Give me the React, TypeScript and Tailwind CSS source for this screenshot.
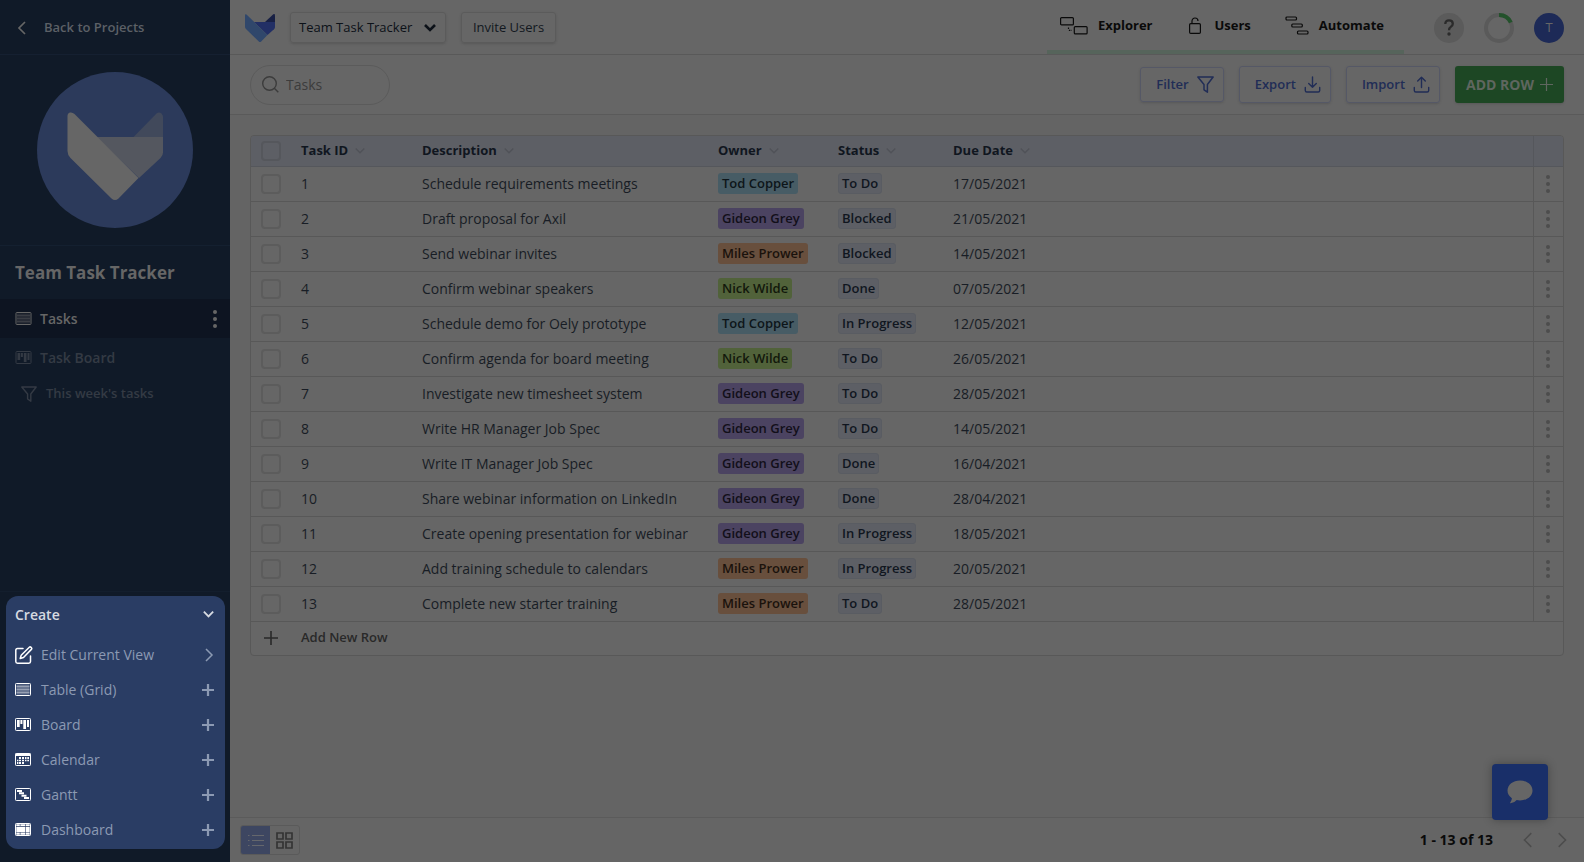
import React from "react";

const FONT = "font-['Open_Sans','Liberation_Sans',sans-serif]";

type Task = { id: number; text: string; owner: string; status: string; due: string };

const tasks: Task[] = [
  { id: 1, text: "Schedule requirements meetings", owner: "Tod Copper", status: "To Do", due: "17/05/2021" },
  { id: 2, text: "Draft proposal for Axil", owner: "Gideon Grey", status: "Blocked", due: "21/05/2021" },
  { id: 3, text: "Send webinar invites", owner: "Miles Prower", status: "Blocked", due: "14/05/2021" },
  { id: 4, text: "Confirm webinar speakers", owner: "Nick Wilde", status: "Done", due: "07/05/2021" },
  { id: 5, text: "Schedule demo for Oely prototype", owner: "Tod Copper", status: "In Progress", due: "12/05/2021" },
  { id: 6, text: "Confirm agenda for board meeting", owner: "Nick Wilde", status: "To Do", due: "26/05/2021" },
  { id: 7, text: "Investigate new timesheet system", owner: "Gideon Grey", status: "To Do", due: "28/05/2021" },
  { id: 8, text: "Write HR Manager Job Spec", owner: "Gideon Grey", status: "To Do", due: "14/05/2021" },
  { id: 9, text: "Write IT Manager Job Spec", owner: "Gideon Grey", status: "Done", due: "16/04/2021" },
  { id: 10, text: "Share webinar information on LinkedIn", owner: "Gideon Grey", status: "Done", due: "28/04/2021" },
  { id: 11, text: "Create opening presentation for webinar", owner: "Gideon Grey", status: "In Progress", due: "18/05/2021" },
  { id: 12, text: "Add training schedule to calendars", owner: "Miles Prower", status: "In Progress", due: "20/05/2021" },
  { id: 13, text: "Complete new starter training", owner: "Miles Prower", status: "To Do", due: "28/05/2021" },
];

const ownerStyle: Record<string, string> = {
  "Tod Copper": "bg-[#475c65] text-[#0d1519]",
  "Gideon Grey": "bg-[#4b4361] text-[#120f19]",
  "Miles Prower": "bg-[#684f3d] text-[#1a120c]",
  "Nick Wilde": "bg-[#51623a] text-[#12180b]",
};

type IconProps = { className?: string };

function Chevron({ dir, className = "", w = 2 }: IconProps & { dir: "down" | "left" | "right"; w?: number }) {
  const d = { down: "M1 3l5 5 5-5", left: "M8 0L2 6l6 6", right: "M4 0l6 6-6 6" }[dir];
  return (
    <svg viewBox="-1 -1 14 14" className={className} fill="none" stroke="currentColor" strokeWidth={w} aria-hidden="true">
      <path d={d} />
    </svg>
  );
}

function Plus({ className = "", w = 2 }: IconProps & { w?: number }) {
  return (
    <svg viewBox="0 0 14 14" className={className} stroke="currentColor" strokeWidth={w} aria-hidden="true">
      <path d="M7 0v14M0 7h14" />
    </svg>
  );
}

function Dots({ className = "" }: IconProps) {
  return (
    <svg viewBox="0 0 4 18" className={className} fill="currentColor" aria-hidden="true">
      <circle cx="2" cy="2" r="2" />
      <circle cx="2" cy="9" r="2" />
      <circle cx="2" cy="16" r="2" />
    </svg>
  );
}

function Funnel({ className = "" }: IconProps) {
  return (
    <svg viewBox="0 0 16 16" className={className} fill="none" stroke="currentColor" strokeWidth="1.4" strokeLinejoin="round" aria-hidden="true">
      <path d="M.8 1h14.4L9.8 8v7.2L6.6 13V8z" />
    </svg>
  );
}

function LogoSmall() {
  return (
    <svg viewBox="0 0 30 28" className="h-7 w-[30px]" role="img" aria-label="Workspace logo">
      <path d="M20 8l8.3-7.7Q30-.5 30 1.5V8z" fill="#182044" />
      <path d="M9 8h21v5q0 1.200-1 2.200L22.500 21z" fill="#222f65" />
      <path d="M0 1.500Q0-.5 1.500.6L22.500 21l-6.300 6.400q-1.200 1-2.400 0L1 15Q0 14 0 12.500z" fill="#30476b" />
    </svg>
  );
}

function LogoLarge() {
  return (
    <svg viewBox="0 0 156 156" className="size-[156px]" role="img" aria-label="Project logo">
      <circle cx="78" cy="78" r="78" fill="#2c3a5b" />
      <path d="M96.500 65L119.500 41.500Q122 39.500 124.500 41.500 126 43 126 45v20z" fill="#41495b" />
      <path d="M59.500 65H126v15.500q0 3-2.500 5.500L102 106z" fill="#54575f" />
      <path d="M30.500 44Q30.500 41 33 40.500q2.300-.5 4.500 1.500L101.500 106 81.500 126.500q-3.500 3.200-7 0L33.500 86q-3-3-3-7z" fill="#666" />
    </svg>
  );
}

function GridIcon({ className = "" }: IconProps) {
  return (
    <svg viewBox="0 0 16 13" className={className} fill="none" stroke="currentColor" aria-hidden="true">
      <rect x=".5" y=".5" width="15" height="12" rx=".8" />
      <rect x="1.500" y="1.500" width="13" height="10" fill="currentColor" stroke="none" opacity=".3" />
      <path d="M1.500 3.500h13M1.500 6.500h13M1.500 9.500h13" opacity=".3" />
    </svg>
  );
}

function BoardIcon({ className = "" }: IconProps) {
  return (
    <svg viewBox="0 0 16 13" className={className} fill="none" stroke="currentColor" aria-hidden="true">
      <rect x=".5" y=".5" width="15" height="12" rx=".8" />
      <path d="M2 2h2.700v7H2zM5.400 2h2v4h-2zM8.300 2H11v9H8.300zM12 2h2v7h-2z" fill="currentColor" stroke="none" />
    </svg>
  );
}

function CalendarIcon({ className = "" }: IconProps) {
  return (
    <svg viewBox="0 0 16 13" className={className} fill="none" stroke="currentColor" aria-hidden="true">
      <rect x=".5" y=".5" width="15" height="12" rx=".8" />
      <path d="M.5.500h15V3H.5z" fill="currentColor" stroke="none" />
      <path d="M4 4h2v2H4zM7 4h2v2H7zM10 4h1.500v2H10zM12.300 4H14v2h-1.700zM2 6.700h1.400v1.500H2zM4 6.700h2v1.500H4zM7 6.700h2v1.500H7zM10 6.700h1.500v1.500H10zM12.300 6.700H14v1.500h-1.700zM2 9h1.400v2H2zM4 9h2v2H4zM7 9h2v2H7z" fill="currentColor" stroke="none" />
    </svg>
  );
}

function GanttIcon({ className = "" }: IconProps) {
  return (
    <svg viewBox="0 0 16 13" className={className} fill="none" stroke="currentColor" aria-hidden="true">
      <rect x=".5" y=".5" width="15" height="12" rx=".8" />
      <path d="M2 2h5v2H2zM4 4.300h5v2H4zM6.500 6.700h5v2h-5zM9 9h5v2H9z" fill="currentColor" stroke="none" />
    </svg>
  );
}

function DashboardIcon({ className = "" }: IconProps) {
  return (
    <svg viewBox="0 0 16 13" className={className} fill="none" stroke="currentColor" aria-hidden="true">
      <rect x=".5" y=".5" width="15" height="12" rx=".8" />
      <path d="M1.300 1.300h3.500V3H1.300zM5.400 1.300h5V3h-5zM11 1.300h3.700V3H11zM1.300 3.700h9.100v5.200H1.300zM11 3.700h3.700v5.200H11zM1.300 9.600h3.500v2.100H1.300zM5.400 9.600h5v2.100h-5zM11 9.600h3.700v2.100H11z" fill="currentColor" stroke="none" />
    </svg>
  );
}

function EditIcon({ className = "" }: IconProps) {
  return (
    <svg viewBox="0 0 18 18" className={className} fill="none" stroke="currentColor" strokeWidth="1.500" strokeLinejoin="round" strokeLinecap="round" aria-hidden="true">
      <path d="M8 2.500H2.500Q.8 2.500.8 4.200v11.300q0 1.700 1.700 1.700h11.300q1.700 0 1.700-1.700V10" />
      <path d="M14.300 1.300q.8-.8 1.800 0l.3.300q.8 1 0 1.800L8.500 11.500l-3.300 1 1-3.200z" />
    </svg>
  );
}

const createItems: [string, (p: IconProps) => React.ReactElement][] = [
  ["Table (Grid)", GridIcon],
  ["Board", BoardIcon],
  ["Calendar", CalendarIcon],
  ["Gantt", GanttIcon],
  ["Dashboard", DashboardIcon],
];

function Sidebar() {
  return (
    <aside className="flex w-[230px] shrink-0 flex-col bg-[#101a28] text-[#666]">
      <a href="#projects" className="flex h-[55px] items-center border-b border-[#152031] pt-px pl-4 text-[13px] font-semibold text-[#5c6066]">
        <Chevron dir="left" className="mr-[14px] size-[14px] text-[#666]" w={1.7} />
        Back to Projects
      </a>
      <div className="flex h-[191px] justify-center border-b border-[#142030] pt-[17px]">
        <LogoLarge />
      </div>
      <h1 className="flex h-[53px] items-center pl-[15px] text-[17px] font-bold">Team Task Tracker</h1>
      <nav aria-label="Views" className="flex flex-col">
        <div className="flex h-[39px] items-center bg-[#0d1421] pr-[13px] pl-[15px]">
          <a href="#tasks" className="flex flex-1 items-center gap-2 text-sm font-semibold">
            <GridIcon className="h-[13px] w-[17px]" />
            Tasks
          </a>
          <button aria-label="View options" className="flex">
            <Dots className="h-[18px] w-1" />
          </button>
        </div>
        <a href="#board" className="flex h-[39px] items-center gap-2 pl-[15px] text-sm font-semibold text-[#343a44]">
          <BoardIcon className="h-[13px] w-[17px]" />
          Task Board
        </a>
        <a href="#week" className="flex h-[34px] items-center gap-[9px] pl-[21px] text-[13px] font-semibold text-[#343a44]">
          <Funnel className="size-4" />
          This week's tasks
        </a>
      </nav>
      <div className="mt-auto border-t border-[#131e2d] pt-1 pr-[5px] pb-[13px] pl-[6px]">
        <section aria-label="Create" className="rounded-xl bg-[#2a3d64] pr-[10px] pb-[2px] pl-[9px] text-[#8c9ab3]">
          <button className="flex h-[37px] w-full items-center justify-between text-sm font-semibold text-[#d6dae1]">
            Create
            <Chevron dir="down" className="size-[13px]" w={2} />
          </button>
          <button className="mt-1 flex h-[35px] w-full items-center text-sm">
            <EditIcon className="mr-2 size-[18px] text-white" />
            Edit Current View
            <Chevron dir="right" className="ml-auto size-[14px]" w={1.5} />
          </button>
          {createItems.map(([label, Icon]) => (
            <button key={label} className="flex h-[35px] w-full items-center text-sm">
              <Icon className="mr-[10px] h-[13px] w-4 text-white" />
              {label}
              <Plus className="mr-px ml-auto size-3" w={2.6} />
            </button>
          ))}
        </section>
      </div>
    </aside>
  );
}

function TopBar() {
  return (
    <header className="flex h-[55px] shrink-0 items-center border-b border-[#595959] pt-px pr-5 pl-[15px]">
      <LogoSmall />
      <button className="ml-[15px] flex h-[31px] w-[156px] items-center justify-between rounded-[3px] border border-[#5b5b5b] px-2 text-[13px] font-medium text-[#0c1118] shadow-sm">
        Team Task Tracker
        <Chevron dir="down" className="size-[14px]" w={2.6} />
      </button>
      <button className="ml-[15px] h-[31px] w-[95px] rounded-[3px] border border-[#5b5b5b] text-[13px] font-medium text-[#121820] shadow-sm">
        Invite Users
      </button>
      <nav aria-label="Main" className="ml-auto flex h-full border-b-4 border-[#56645b] pr-5 pl-[13px] text-[13px] font-bold text-[#0a0a0a]">
        <a href="#explorer" className="flex items-center">
          <svg viewBox="0 0 28 18" className="mr-[10px] h-[18px] w-7" fill="none" stroke="currentColor" strokeWidth="1.200" aria-hidden="true">
            <rect x=".6" y=".6" width="12.800" height="7.300" rx="1" />
            <rect x="14.300" y="9.600" width="12.800" height="7.300" rx="1" />
            <path d="M8.500 10.500v1.500l1 1.300h2.300" strokeDasharray="1.500 1" />
          </svg>
          Explorer
        </a>
        <a href="#users" className="ml-9 flex items-center">
          <svg viewBox="0 0 12 17" className="mr-[14px] h-[17px] w-3" fill="none" stroke="currentColor" strokeWidth="1.200" aria-hidden="true">
            <rect x=".6" y="6.600" width="10.800" height="9.800" rx="1.200" />
            <path d="M3 6.600V4a3 3 0 0 1 6 0" />
          </svg>
          Users
        </a>
        <a href="#automate" className="ml-[34px] flex items-center">
          <svg viewBox="0 0 24 19" className="mr-[10px] h-[19px] w-6" fill="none" stroke="currentColor" strokeWidth="1.200" aria-hidden="true">
            <rect x="1" y="1" width="10.500" height="3" rx="1" />
            <rect x="6.800" y="8" width="10.500" height="3" rx="1" />
            <rect x="12.500" y="15" width="10.500" height="3" rx="1" />
          </svg>
          Automate
        </a>
      </nav>
      <button aria-label="Help" className="ml-[30px] flex size-[30px] items-center justify-center rounded-full bg-[#5b5b5b] text-[#2b2b2b]">
        <svg viewBox="0 0 10 17" className="h-[17px] w-[10px]" fill="none" aria-hidden="true">
          <path d="M1.300 5Q1.300 1.400 5 1.400T8.800 4.700Q8.800 6.300 7 7.600 5 9 5 11.300" stroke="currentColor" strokeWidth="2.300" />
          <circle cx="5" cy="15" r="1.700" fill="currentColor" />
        </svg>
      </button>
      <svg viewBox="0 0 30 30" className="ml-5 size-[30px]" fill="none" strokeWidth="4" role="img" aria-label="Progress">
        <circle cx="15" cy="15" r="13" stroke="#5a5a5a" />
        <path d="M15 2A13 13 0 0 1 26.800 9.500" stroke="#23522b" />
      </svg>
      <button aria-label="Account" className="ml-5 flex size-[30px] items-center justify-center rounded-full bg-[#1d2a57] text-[13px] text-[#666]">
        T
      </button>
    </header>
  );
}

const outlineButton =
  "flex items-center rounded-[3px] border border-[#555866] text-[13px] font-semibold text-[#212d56] shadow-sm";

function Tray({ up }: { up: boolean }) {
  return (
    <svg viewBox="0 0 16 17" className="size-[17px]" fill="none" stroke="currentColor" strokeWidth="1.400" strokeLinejoin="round" strokeLinecap="round" aria-hidden="true">
      <path d="M.8 11.500v3q0 1.500 1.500 1.500h11.400q1.500 0 1.500-1.500v-3" />
      <path d={up ? "M8 11.500V1.500M4.200 5L8 1.300 11.800 5" : "M8 1v10.200M4.200 7.500L8 11.300l3.800-3.800"} />
    </svg>
  );
}

function ActionBar() {
  return (
    <div className="flex h-[60px] shrink-0 items-center border-b border-[#5a5a5a] px-5">
      <label className="flex h-10 w-[140px] items-center rounded-full border border-[#5b5b5b] pl-[11px]">
        <svg viewBox="0 0 17 17" className="size-[17px] shrink-0" fill="none" stroke="#3c3c3c" strokeWidth="1.400" aria-hidden="true">
          <circle cx="7.500" cy="7.500" r="6.800" />
          <path d="M12.300 12.300l4 4" />
        </svg>
        <input type="text" aria-label="Search tasks" placeholder="Tasks" className="ml-[7px] h-8 w-[90px] bg-transparent text-sm text-[#3a3a3a] outline-none placeholder:text-[#3c3c3c]" />
      </label>
      <div className="ml-auto flex items-center gap-[15px]">
        <button className={outlineButton + " h-[35px] gap-2 pr-[9px] pl-[15px]"}>
          Filter
          <Funnel className="size-[17px]" />
        </button>
        <button className={outlineButton + " h-[37px] gap-2 pr-[9px] pl-[15px]"}>
          Export
          <Tray up={false} />
        </button>
        <button className={outlineButton + " h-[37px] gap-2 pr-[9px] pl-[15px]"}>
          Import
          <Tray up />
        </button>
        <button className="flex h-[37px] items-center gap-[6px] rounded-[3px] bg-[#1d4724] px-[11px] text-sm font-bold text-[#5f665f] shadow-sm">
          ADD ROW
          <Plus className="size-[13px]" w={1.3} />
        </button>
      </div>
    </div>
  );
}

const boxClass = "block size-5 appearance-none rounded-[4px] border-2 border-[#5c5c5c]";

function TaskTable() {
  return (
    <div className="mx-5 mt-5 overflow-hidden rounded border border-[#585858] bg-[#666]">
      <table className="w-full table-fixed border-collapse text-left text-sm text-[#181d25]">
        <colgroup>
          <col className="w-[50px]" />
          <col className="w-[121px]" />
          <col className="w-[296px]" />
          <col className="w-[120px]" />
          <col className="w-[115px]" />
          <col />
          <col className="w-[30px]" />
        </colgroup>
        <thead>
          <tr className="h-[30px] border-b border-[#55575c] bg-[#5d5f65] text-[13px] text-[#10161f]">
            <th className="pl-[10px]">
              <input type="checkbox" aria-label="Select all rows" className="block size-5 appearance-none rounded-[4px] border-2 border-[#55575c]" />
            </th>
            {["Task ID", "Description", "Owner", "Status", "Due Date"].map((h) => (
              <th key={h} className="py-0 font-bold">
                <span className="flex items-center gap-[6px]">
                  {h}
                  <Chevron dir="down" className="size-3 text-[#505258]" w={1.6} />
                </span>
              </th>
            ))}
            <th className="border-l border-[#55575c]" />
          </tr>
        </thead>
        <tbody>
          {tasks.map((t) => (
            <tr key={t.id} className="h-[35px] border-b border-[#585858]">
              <td className="pl-[10px]">
                <input type="checkbox" aria-label={"Select task " + t.id} className={boxClass} />
              </td>
              <td>{t.id}</td>
              <td className="whitespace-nowrap">{t.text}</td>
              <td>
                <span className={"inline-flex h-[21px] items-center rounded-[3px] px-1 text-[13px] font-semibold whitespace-nowrap " + ownerStyle[t.owner]}>{t.owner}</span>
              </td>
              <td>
                <span className="inline-flex h-[21px] items-center rounded-[3px] border border-[#595c62] bg-[#5d5f65] px-[3px] text-[13px] font-semibold whitespace-nowrap text-[#10161f]">{t.status}</span>
              </td>
              <td>{t.due}</td>
              <td className="border-l border-[#585858]">
                <button aria-label={"Options for task " + t.id} className="ml-3 flex text-[#4d4d4d]">
                  <Dots className="h-[18px] w-1" />
                </button>
              </td>
            </tr>
          ))}
        </tbody>
      </table>
      <button className="flex h-[33px] w-full items-center pl-[13px] text-[13px] font-semibold text-[#292929]">
        <Plus className="mr-[23px] size-[14px]" w={1.6} />
        Add New Row
      </button>
    </div>
  );
}

function Footer() {
  return (
    <footer className="mt-auto flex h-[45px] shrink-0 items-center border-t border-[#5b5b5b] bg-[#656565] pr-[15px] pl-[10px]">
      <div className="flex h-[30px] overflow-hidden rounded-[3px] border border-[#5a5a5a]">
        <button aria-label="List view" className="flex w-[29px] items-center justify-center bg-[#3d4661] text-[#65676c]">
          <svg viewBox="0 0 16 13" className="h-[13px] w-4" stroke="currentColor" strokeWidth="1.200" aria-hidden="true">
            <path d="M0 1.500h1.500M0 6.500h1.500M0 11.500h1.500M4 1.500h12M4 6.500h12M4 11.500h12" />
          </svg>
        </button>
        <button aria-label="Card view" className="flex w-[29px] items-center justify-center text-[#343434]">
          <svg viewBox="0 0 17 17" className="size-[17px]" fill="none" stroke="currentColor" strokeWidth="1.700" aria-hidden="true">
            <path d="M1 1h6v6H1zM10 1h6v6h-6zM1 10h6v6H1zM10 10h6v6h-6z" />
          </svg>
        </button>
      </div>
      <p className="ml-auto text-sm font-bold text-[#0a0a0a]">1 - 13 of 13</p>
      <button aria-label="Previous page" className="ml-7 flex text-[#4c4c4c]">
        <Chevron dir="left" className="size-4" w={1.3} />
      </button>
      <button aria-label="Next page" className="ml-4 flex text-[#4c4c4c]">
        <Chevron dir="right" className="size-4" w={1.3} />
      </button>
    </footer>
  );
}

export default function App() {
  return (
    <div className={"flex min-h-screen bg-[#646464] " + FONT}>
      <Sidebar />
      <main className="relative flex min-w-0 flex-1 flex-col bg-[#646464]">
        <div className="bg-[#666]">
          <TopBar />
          <ActionBar />
        </div>
        <TaskTable />
        <Footer />
        <button aria-label="Open chat" className="absolute right-9 bottom-[42px] flex size-14 items-center justify-center rounded-[4px] bg-[#192f69] shadow-[0_0_10px_rgba(0,0,0,0.3)]">
          <svg viewBox="0 0 26 24" className="h-6 w-[26px]" fill="#666" aria-hidden="true">
            <path d="M13 .5c7 0 12.500 4.300 12.500 10S20 20.500 13 20.500q-2 0-3.300-.4Q7.500 23 3.600 23.300q-.8 0-.3-.7 1.500-2 1.600-4.300Q.5 15 .5 10.500C.5 4.800 6 .5 13 .5z" />
          </svg>
        </button>
      </main>
    </div>
  );
}
